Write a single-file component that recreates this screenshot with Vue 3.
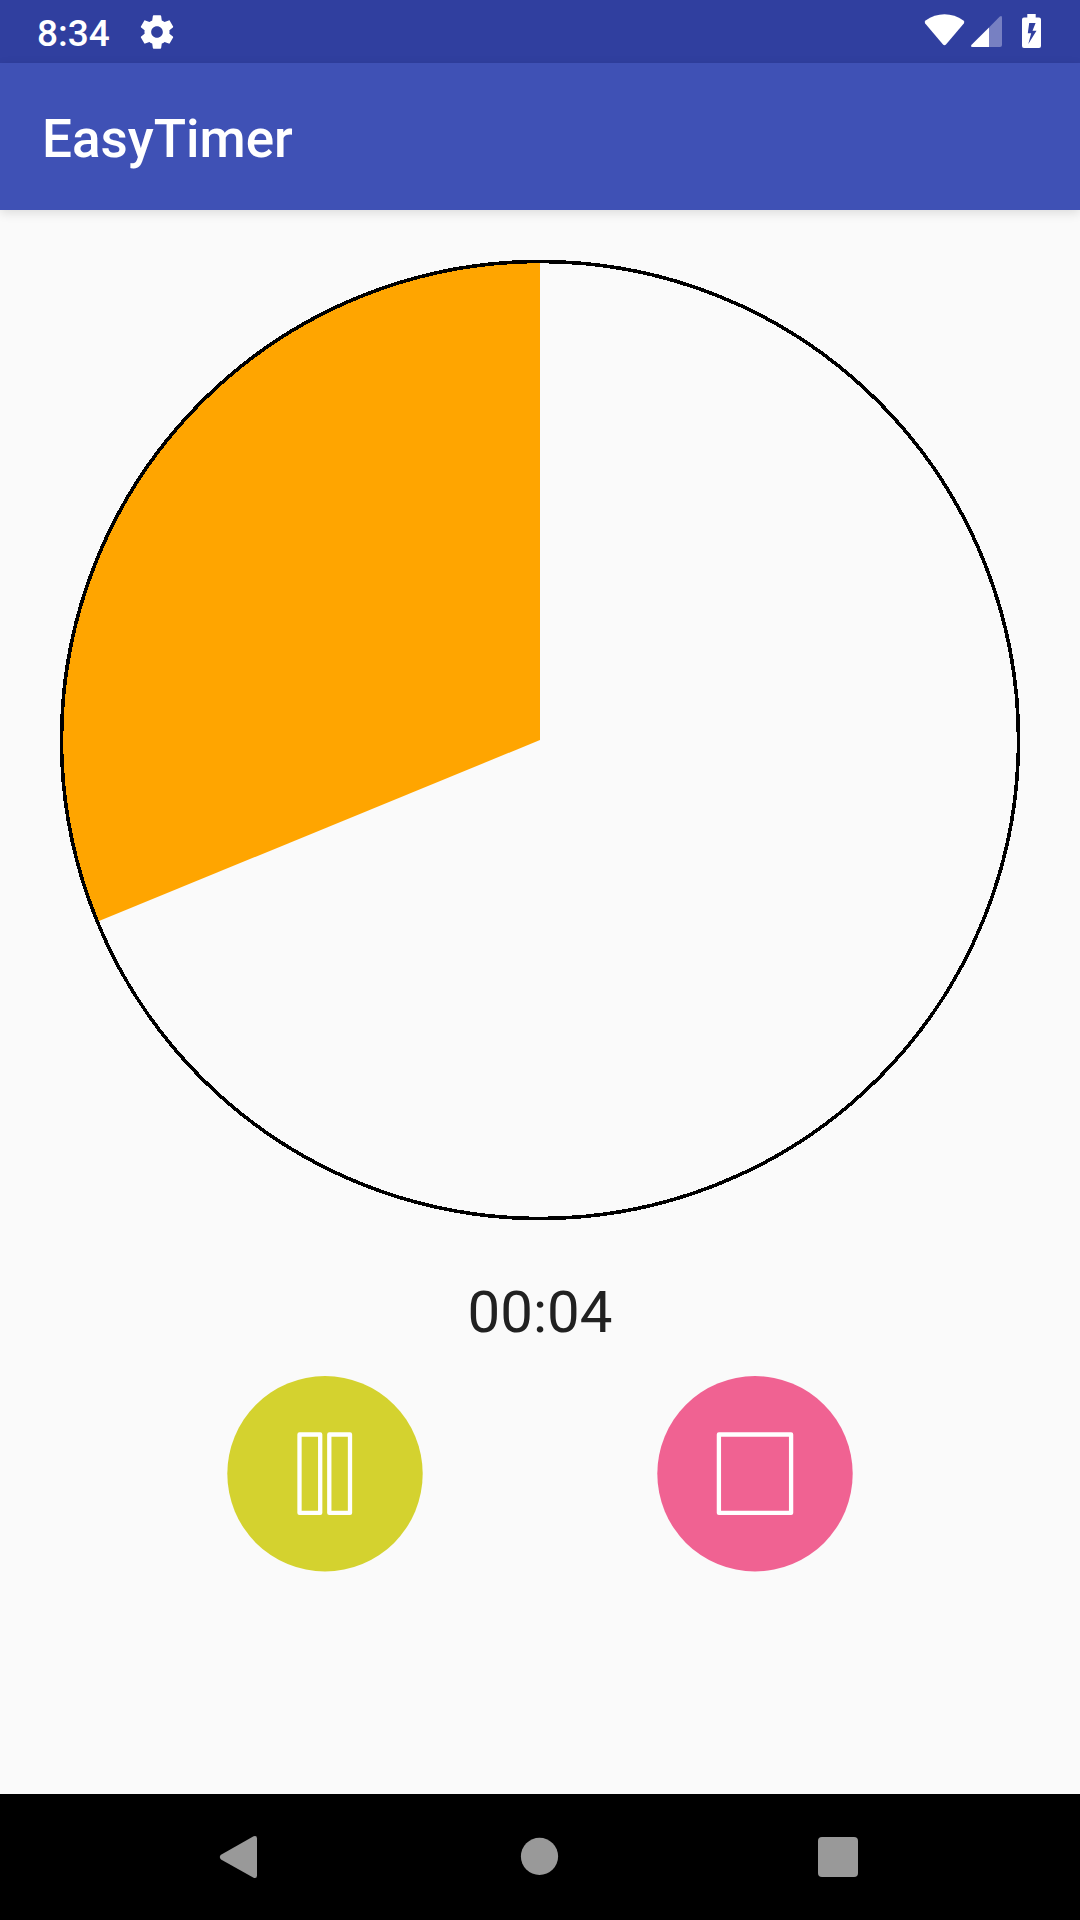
<script setup>
import { computed, ref } from 'vue'

const time = ref('00:04')
const elapsedDegrees = ref(247.68)

const slicePath = computed(() => {
  const angle = (elapsedDegrees.value * Math.PI) / 180
  const r = 478
  const x = 480 + r * Math.sin(angle)
  const y = 480 - r * Math.cos(angle)
  return `M480 480L${x} ${y}A${r} ${r} 0 0 1 480 2Z`
})
</script>

<template>
  <div class="screen">
    <header class="status">
      <span class="clock">8:34</span>
      <svg class="gear" width="40" height="40" viewBox="0 0 24 24">
        <path fill="#fff" d="M19.43 12.98c.04-.32.07-.64.07-.98s-.03-.66-.07-.98l2.11-1.65c.19-.15.24-.42.12-.64l-2-3.46c-.12-.22-.39-.3-.61-.22l-2.49 1c-.52-.4-1.08-.73-1.69-.98l-.38-2.65C14.46 2.18 14.25 2 14 2h-4c-.25 0-.46.18-.49.42l-.38 2.65c-.61.25-1.17.59-1.69.98l-2.49-1c-.23-.09-.49 0-.61.22l-2 3.46c-.13.22-.07.49.12.64l2.11 1.65c-.04.32-.07.65-.07.98s.03.66.07.98l-2.11 1.65c-.19.15-.24.42-.12.64l2 3.46c.12.22.39.3.61.22l2.49-1c.52.4 1.08.73 1.69.98l.38 2.65c.03.24.24.42.49.42h4c.25 0 .46-.18.49-.42l.38-2.65c.61-.25 1.17-.59 1.69-.98l2.49 1c.23.09.49 0 .61-.22l2-3.46c.12-.22.07-.49-.12-.64l-2.11-1.65zM12 15.5c-1.93 0-3.5-1.57-3.5-3.5s1.57-3.5 3.5-3.5 3.5 1.57 3.5 3.5-1.57 3.5-3.5 3.5z" />
      </svg>
      <svg class="system" width="120" height="63" viewBox="0 0 120 63">
        <path fill="#fff" d="M5.2 23.4Q4 21.8 5.6 20.6C17 12.2 32 12.2 43.4 20.6Q45 21.8 43.8 23.4L26.2 44.2Q24.5 46.2 22.8 44.2Z" />
        <path fill="#7780c2" d="M69 27.5L79.8 16.6Q82 15 82 17.6V45Q82 47 80 47H69Z" />
        <path fill="#fff" d="M69 27.5V47H52.5Q50 47 51.6 44.8Z" />
        <path fill="#fff" fill-rule="evenodd" d="M107.3 14H115.7V17.5H119Q121 17.5 121 19.5V46Q121 48 119 48H104Q102 48 102 46V19.5Q102 17.5 104 17.5H107.3ZM109.2 23L107.8 33.2H111.2L108.3 44L116.5 30.8H112.5L115.6 23Z" />
      </svg>
    </header>
    <div class="appbar"><h1>EasyTimer</h1></div>
    <main>
      <svg class="dial" width="960" height="960" viewBox="0 0 960 960">
        <path :d="slicePath" fill="#ffa500" />
        <circle cx="480" cy="480" r="478.5" fill="none" stroke="#000" stroke-width="3.6" shape-rendering="crispEdges" />
      </svg>
      <div class="time">{{ time }}</div>
      <div class="controls">
        <button class="round" aria-label="Pause">
          <svg width="196" height="196" viewBox="0 0 196 196">
            <circle cx="98" cy="97.8" r="97.7" fill="#d4d22f" />
            <path d="M72.5 58.5H93.2V136.9H72.5ZM102.3 58.5H123V136.9H102.3Z" />
          </svg>
        </button>
        <button class="round" aria-label="Stop">
          <svg width="196" height="196" viewBox="0 0 196 196">
            <circle cx="98" cy="97.8" r="97.7" fill="#f06292" />
            <path d="M61.9 58.5H134.1V136.9H61.9Z" />
          </svg>
        </button>
      </div>
    </main>
    <nav>
      <svg width="1080" height="126" viewBox="0 0 1080 126" fill="#999">
        <path d="M221 60.8L253.6 42.3Q257 41.2 257 44.5V81.5Q257 84.8 253.6 83.8L221 65.4Q218.6 63 221 60.8Z" />
        <circle cx="539.5" cy="62.4" r="18.6" />
        <rect x="818" y="43" width="40" height="40" rx="4" />
      </svg>
    </nav>
  </div>
</template>

<style>
body {
  margin: 0;
}
</style>

<style scoped>
.screen {
  width: 1080px;
  height: 1920px;
  display: flex;
  flex-direction: column;
  background: #fafafa;
  font-family: Roboto, sans-serif;
  overflow: hidden;
}
.status {
  height: 63px;
  flex: none;
  display: flex;
  align-items: center;
  background: #303f9f;
  color: #fff;
}
.clock {
  width: 100px;
  margin-left: 37px;
  font-size: 37px;
  font-weight: 500;
  line-height: 43px;
  padding-top: 4px;
}
.gear {
  flex: none;
}
.system {
  margin-left: auto;
  margin-right: 40px;
  overflow: visible;
}
.appbar {
  height: 147px;
  flex: none;
  display: flex;
  align-items: center;
  box-sizing: border-box;
  padding-left: 42px;
  background: #3f51b5;
  color: #fff;
  box-shadow: 0 3px 10px rgba(0, 0, 0, 0.12);
}
h1 {
  margin: 0;
  padding-top: 5px;
  font-size: 53px;
  font-weight: 500;
  line-height: 62px;
}
main {
  flex: 1;
  display: flex;
  flex-direction: column;
  align-items: center;
  padding-top: 50px;
}
.dial {
  flex: none;
}
.time {
  margin-top: 58px;
  height: 68px;
  line-height: 68px;
  font-size: 58.2px;
  color: #212121;
}
.controls {
  display: flex;
  gap: 234px;
  margin-top: 30px;
}
.round {
  width: 196px;
  height: 196px;
  padding: 0;
  border: 0;
  border-radius: 50%;
  background: none;
}
.round svg {
  display: block;
}
.round path {
  fill: none;
  stroke: #fff;
  stroke-width: 4.3;
  stroke-linejoin: round;
}
nav {
  height: 126px;
  flex: none;
  background: #000;
}
nav svg {
  display: block;
}
</style>
